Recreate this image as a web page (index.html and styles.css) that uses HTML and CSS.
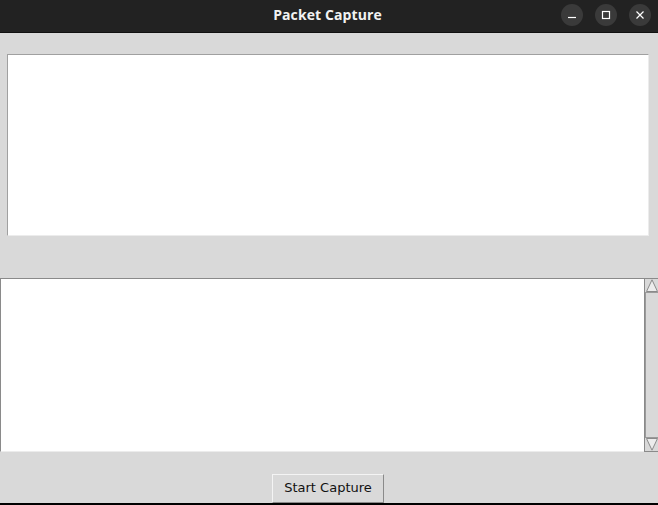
FILE: index.html
```html
<!DOCTYPE html>
<html>
<head>
<meta charset="utf-8">
<link rel="stylesheet" href="styles.css">
</head>
<body>
<div class="window">
  <header class="titlebar">
    <span class="title">Packet Capture</span>
    <div class="controls">
      <span class="ctl"><svg width="10" height="10" viewBox="0 0 10 10"><path d="M1 7.5h8" stroke="#fff" stroke-width="1.2"/></svg></span>
      <span class="ctl"><svg width="10" height="10" viewBox="0 0 10 10"><rect x="1.5" y="1.5" width="7" height="7" fill="none" stroke="#fff" stroke-width="1.2"/></svg></span>
      <span class="ctl"><svg width="10" height="10" viewBox="0 0 10 10"><path d="M1.5 1.5l7 7M8.5 1.5l-7 7" stroke="#fff" stroke-width="1.2"/></svg></span>
    </div>
  </header>
  <main class="content">
    <div class="upper"><div class="box"></div></div>
    <div class="lower">
      <div class="textarea"></div>
      <div class="scrollbar">
        <div class="arrow up"><svg width="12" height="13" viewBox="0 0 12 13"><path d="M6 0.8L11.5 12.5H0.5Z" fill="#ececec" stroke="#8a8a8a" stroke-width="1"/></svg></div>
        <div class="slider"></div>
        <div class="arrow down"><svg width="12" height="13" viewBox="0 0 12 13"><path d="M6 12.2L11.5 0.5H0.5Z" fill="#ececec" stroke="#8a8a8a" stroke-width="1"/></svg></div>
      </div>
    </div>
    <div class="actions"><button class="btn">Start Capture</button></div>
  </main>
  <div class="bottomline"></div>
</div>
</body>
</html>
```
FILE: styles.css
```css
* { box-sizing: border-box; }
html, body { margin: 0; padding: 0; }
body { width: 658px; height: 505px; overflow: hidden; background: #d9d9d9; font-family: "DejaVu Sans", sans-serif; }
.window { display: flex; flex-direction: column; height: 505px; }
.titlebar {
  height: 33px; background: #222222; border-bottom: 1px solid #111;
  display: flex; align-items: center; justify-content: center; position: relative;
  padding-bottom: 3px;
}
.title { color: #f2f2f2; font-family: "Open Sans", "DejaVu Sans", sans-serif; font-weight: 700; font-size: 14px; letter-spacing: 0.1px; margin-left: -3px; }
.controls { position: absolute; right: 7px; top: 4px; display: flex; gap: 12px; }
.ctl { width: 22px; height: 22px; border-radius: 50%; background: #3a3a3a; display: flex; align-items: center; justify-content: center; }
.content { flex: 1; display: flex; flex-direction: column; }
.upper { padding: 21px 9px 0 7px; }
.box { height: 182px; background: #fff; border-top: 1px solid #a0a0a0; border-left: 1px solid #a0a0a0; border-right: 1px solid #ececec; border-bottom: 1px solid #ececec; }
.lower { margin-top: 42px; display: flex; height: 174px; }
.textarea { flex: 1; background: #fff; border-top: 1px solid #8a8a8a; border-left: 1px solid #8a8a8a; border-bottom: 1px solid #ececec; }
.scrollbar { width: 14px; background: #d9d9d9; border: 1px solid #8a8a8a; border-right: none; display: flex; flex-direction: column; }
.arrow { height: 13px; display: flex; align-items: center; justify-content: center; }
.slider { flex: 1; margin: 0; border: 1px solid #9a9a9a; border-right: none; background: #d9d9d9; }
.actions { display: flex; justify-content: center; padding-top: 22px; padding-right: 2px; }
.btn { width: 112px; height: 29px; background: #d9d9d9; border: 1px solid; border-color: #f4f4f4 #8a8a8a #8a8a8a #f4f4f4; font-family: "DejaVu Sans", sans-serif; font-size: 13px; color: #111; padding: 0 0 2px 0; }
.bottomline { height: 2px; background: #000; }
```
